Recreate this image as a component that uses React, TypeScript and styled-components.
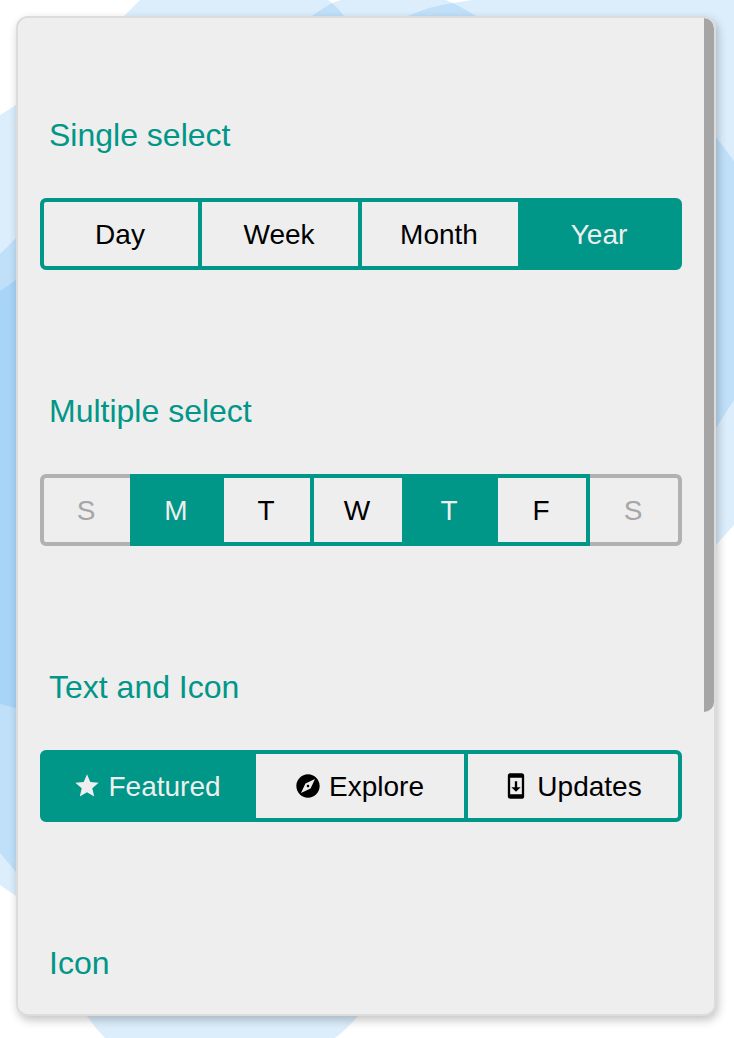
import React from "react";
import styled, { createGlobalStyle, css } from "styled-components";

const Global = createGlobalStyle`
  * { box-sizing: border-box; }
  html, body { margin: 0; background: #fff; }
  body { font-family: "Liberation Sans", Arial, sans-serif; overflow: hidden; }
`;

const Page = styled.main`
  position: relative;
  width: 734px;
  height: 1038px;
  padding: 16px 18px 22px 16px;
  overflow: hidden;
`;

const Backdrop = styled.svg`
  position: absolute;
  inset: 0;
  width: 734px;
  height: 1038px;
`;

const Panel = styled.div`
  position: relative;
  height: 1000px;
  padding: 96px 32px 0 22px;
  border: 2px solid #dcdcdc;
  border-radius: 12px;
  background: #eee;
  background-clip: padding-box;
  box-shadow: 2px 4px 10px rgba(0, 0, 0, 0.24);
  overflow: hidden;
`;

const ScrollThumb = styled.div`
  position: absolute;
  top: 0;
  right: 0;
  width: 10px;
  height: 694px;
  border-radius: 0 10px 10px 0;
  background: #a5a5a5;
`;

const Section = styled.section`
  height: 276px;
`;

const Title = styled.h2`
  margin: 0 0 48px 9px;
  height: 36px;
  line-height: 42px;
  font-size: 32px;
  font-weight: 400;
  color: #009688;
`;

const Group = styled.div<{ $columns: string }>`
  display: grid;
  grid-template-columns: ${(p) => p.$columns};
  column-gap: 0;
  width: 642px;
  height: 72px;
`;

const Segment = styled.button<{ $selected?: boolean }>`
  position: relative;
  z-index: 1;
  display: flex;
  align-items: center;
  justify-content: center;
  gap: 7px;
  margin: 0 0 0 -4px;
  padding: 2px 2px 0 0;
  border: 4px solid #009688;
  background: transparent;
  color: #000;
  font: 400 28px/32px "Liberation Sans", Arial, sans-serif;
  &:first-child { margin-left: 0; border-radius: 6px 0 0 6px; }
  &:last-child { border-radius: 0 6px 6px 0; }
  &:disabled { z-index: 0; border-color: #b1b1b1; color: #a6a6a6; }
  ${(p) => p.$selected && css`background: #009688; color: #eee;`}
`;

const Glyph = styled.svg`
  flex: none;
  width: 28px;
  height: 28px;
  margin-top: -3px;
  fill: currentColor;
`;

const icons = {
  star: "M12 17.27 18.18 21l-1.64-7.03L22 9.24l-7.19-.61L12 2 9.19 8.63 2 9.24l5.46 4.73L5.82 21z",
  explore:
    "M12 10.9c-.61 0-1.1.49-1.1 1.1s.49 1.1 1.1 1.1c.61 0 1.1-.49 1.1-1.1s-.49-1.1-1.1-1.1zM12 2C6.48 2 2 6.48 2 12s4.48 10 10 10 10-4.48 10-10S17.52 2 12 2zm2.19 12.19L6 18l3.81-8.19L18 6l-3.81 8.19z",
  update:
    "M17 1.01 7 1c-1.1 0-2 .9-2 2v18c0 1.1.9 2 2 2h10c1.1 0 2-.9 2-2V3c0-1.1-.9-1.99-2-1.99zM17 19H7V5h10v14zm-1-6h-3V8h-2v5H8l4 4 4-4z",
};

type Item = { label: string; selected?: boolean; disabled?: boolean; icon?: keyof typeof icons };

const groups: { title: string; columns: string; items: Item[] }[] = [
  {
    title: "Single select",
    columns: "162px 160px 160px 160px",
    items: [{ label: "Day" }, { label: "Week" }, { label: "Month" }, { label: "Year", selected: true }],
  },
  {
    title: "Multiple select",
    columns: "94px 90px 90px 92px 92px 92px 92px",
    items: [
      { label: "S", disabled: true },
      { label: "M", selected: true },
      { label: "T" },
      { label: "W" },
      { label: "T", selected: true },
      { label: "F" },
      { label: "S", disabled: true },
    ],
  },
  {
    title: "Text and Icon",
    columns: "216px 212px 214px",
    items: [
      { label: "Featured", icon: "star", selected: true },
      { label: "Explore", icon: "explore" },
      { label: "Updates", icon: "update" },
    ],
  },
  { title: "Icon", columns: "", items: [] },
];

export default function App() {
  return (
    <>
      <Global />
      <Page>
        <Backdrop viewBox="0 0 734 1038" aria-hidden="true">
          <path fill="#dceefc" d="M140 0H734V525L716 545H600V60H80Z" />
          <path fill="#fff" d="M328 0H341L332 3ZM446 0H472L453 3Z" />
          <path fill="#c0e0f9" d="M312 16Q321 9 332 3Q339 9 344 16ZM408 16Q430 6 453 3Q465 9 476 16ZM716 137L734 161V400L716 428H600V137Z" />
          <path fill="#dceefc" d="M0 115L16 105H60V925L16 896L0 885ZM87 1016H358Q348 1028 335 1038H105Q95 1028 87 1016Z" />
          <path fill="#c0e0f9" d="M0 254L16 238V872L0 853Z" />
          <path fill="#a8d4f8" d="M0 291L16 280V708L0 704Z" />
        </Backdrop>
        <Panel>
          {groups.map((group) => (
            <Section key={group.title}>
              <Title>{group.title}</Title>
              {group.items.length > 0 && (
                <Group $columns={group.columns}>
                  {group.items.map((item, i) => (
                    <Segment key={i} $selected={item.selected} disabled={item.disabled}>
                      {item.icon && (
                        <Glyph viewBox="0 0 24 24">
                          <path d={icons[item.icon]} />
                        </Glyph>
                      )}
                      <span>{item.label}</span>
                    </Segment>
                  ))}
                </Group>
              )}
            </Section>
          ))}
          <ScrollThumb />
        </Panel>
      </Page>
    </>
  );
}
